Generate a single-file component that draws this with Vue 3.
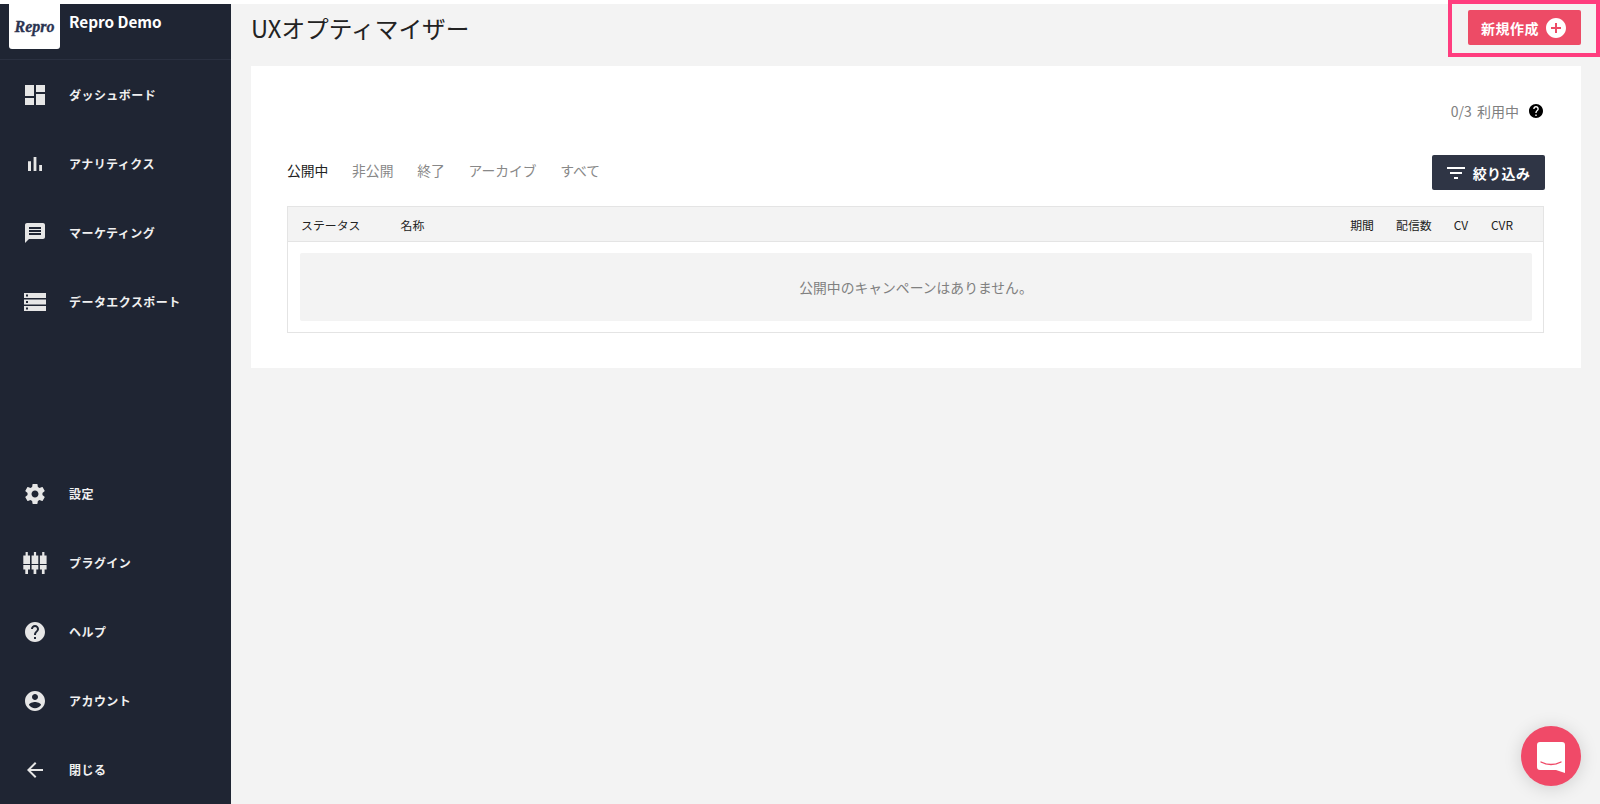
<template>
  <div class="app">
    <aside class="sidebar">
      <div class="brand">
        <div class="logo">Repro</div>
        <span class="brand-name">Repro Demo</span>
      </div>
      <nav class="nav">
        <a v-for="item in topNav" :key="item.label" class="nav-item">
          <svg class="nav-icon" viewBox="0 0 24 24"><path :d="item.icon" /></svg>
          <span>{{ item.label }}</span>
        </a>
      </nav>
      <nav class="nav nav-bottom">
        <a v-for="item in bottomNav" :key="item.label" class="nav-item">
          <svg class="nav-icon" viewBox="0 0 24 24"><path :d="item.icon" /></svg>
          <span>{{ item.label }}</span>
        </a>
      </nav>
    </aside>

    <main class="main">
      <header class="header">
        <h1 class="title">UXオプティマイザー</h1>
        <button class="create-btn">
          新規作成
          <svg class="create-icon" viewBox="2 2 20 20"><path :d="icons.add" /></svg>
        </button>
      </header>

      <section class="card">
        <div class="usage">
          <span>0/3 利用中</span>
          <svg class="usage-icon" viewBox="2 2 20 20"><path :d="icons.help" /></svg>
        </div>

        <div class="toolbar">
          <ul class="tabs">
            <li v-for="(tab, i) in tabs" :key="tab" :class="{ active: i === 0 }">{{ tab }}</li>
          </ul>
          <button class="filter-btn">
            <svg class="filter-icon" viewBox="3 6 18 12"><path :d="icons.filter" /></svg>
            絞り込み
          </button>
        </div>

        <div class="table">
          <div class="table-head">
            <span class="col-status">ステータス</span>
            <span class="col-name">名称</span>
            <span class="col-period">期間</span>
            <span class="col-sent">配信数</span>
            <span class="col-cv">CV</span>
            <span class="col-cvr">CVR</span>
          </div>
          <div class="table-body">
            <div class="empty">公開中のキャンペーンはありません。</div>
          </div>
        </div>
      </section>
    </main>

    <!-- 注釈の枠 -->
    <div class="highlight"></div>

    <button class="chat">
      <svg viewBox="0 0 28 31" width="28" height="31">
        <path d="M3 0h22a3 3 0 0 1 3 3v28l-9-3H3a3 3 0 0 1-3-3V3a3 3 0 0 1 3-3z" fill="#fff" />
        <path d="M4 20c6 3.400 14 3.400 20 0" fill="none" stroke="#f04a68" stroke-width="1.400" stroke-linecap="round" />
      </svg>
    </button>
  </div>
</template>

<script setup>
const icons = {
  add: 'M12 2C6.48 2 2 6.48 2 12s4.48 10 10 10 10-4.48 10-10S17.52 2 12 2zm5 11h-4v4h-2v-4H7v-2h4V7h2v4h4v2z',
  help: 'M12 2C6.48 2 2 6.48 2 12s4.48 10 10 10 10-4.48 10-10S17.52 2 12 2zm1 17h-2v-2h2v2zm2.07-7.75l-.9.92C13.45 12.9 13 13.5 13 15h-2v-.5c0-1.1.45-2.1 1.17-2.83l1.24-1.26c.37-.36.59-.86.59-1.41 0-1.1-.9-2-2-2s-2 .9-2 2H8c0-2.21 1.79-4 4-4s4 1.79 4 4c0 .88-.36 1.68-.93 2.25z',
  filter: 'M10 18h4v-2h-4v2zM3 6v2h18V6H3zm3 7h12v-2H6v2z'
}

// プラグインの縦 3 本
const plug = (x) =>
  `M${x + 2.300} 1h2.200v3.500h2.200V13h-6.700V4.500h2.300zM${x} 14h6.700v4.500h-2v4.500h-2.700v-4.500h-2z`

const topNav = [
  { label: 'ダッシュボード', icon: 'M2 13h9V2H2v11zm0 9h9v-7H2v7zm11 0h9V11h-9v11zm0-20v7h9V2h-9z' },
  { label: 'アナリティクス', icon: 'M5 9.2h3V19H5zM10.6 5h2.8v14h-2.8zm5.6 8H19v6h-2.8z' },
  { label: 'マーケティング', icon: 'M20 2H4c-1.1 0-1.99.9-1.99 2L2 22l4-4h14c1.1 0 2-.9 2-2V4c0-1.1-.9-2-2-2zm-2 12H6v-2h12v2zm0-3H6V9h12v2zm0-3H6V6h12v2z' },
  { label: 'データエクスポート', icon: 'M1 21h22v-5H1v5zm2-3.500h2v2H3v-2zM1 3v5h22V3H1zm4 3.500H3v-2h2v2zM1 14.500h22v-5H1v5zm2-3.500h2v2H3v-2z' }
]

const bottomNav = [
  { label: '設定', icon: 'M19.43 12.98c.04-.32.07-.64.07-.98s-.03-.66-.07-.98l2.11-1.65c.19-.15.24-.42.12-.64l-2-3.46c-.12-.22-.39-.3-.61-.22l-2.49 1c-.52-.4-1.08-.73-1.69-.98l-.38-2.65C14.46 2.18 14.25 2 14 2h-4c-.25 0-.46.18-.49.42l-.38 2.65c-.61.25-1.17.59-1.69.98l-2.49-1c-.23-.09-.49 0-.61.22l-2 3.46c-.13.22-.07.49.12.64l2.11 1.65c-.04.32-.07.65-.07.98s.03.66.07.98l-2.11 1.65c-.19.15-.24.42-.12.64l2 3.46c.12.22.39.3.61.22l2.49-1c.52.4 1.08.73 1.69.98l.38 2.65c.03.24.24.42.49.42h4c.25 0 .46-.18.49-.42l.38-2.65c.61-.25 1.17-.59 1.69-.98l2.49 1c.23.09.49 0 .61-.22l2-3.46c.12-.22.07-.49-.12-.64l-2.11-1.65zM12 15.500c-1.93 0-3.500-1.57-3.500-3.500s1.57-3.500 3.500-3.500 3.500 1.57 3.500 3.500-1.57 3.500-3.500 3.500z' },
  { label: 'プラグイン', icon: plug(0.3) + plug(8.6) + plug(16.9) },
  { label: 'ヘルプ', icon: icons.help },
  { label: 'アカウント', icon: 'M12 2C6.48 2 2 6.48 2 12s4.48 10 10 10 10-4.48 10-10S17.52 2 12 2zm0 3c1.66 0 3 1.34 3 3s-1.34 3-3 3-3-1.34-3-3 1.34-3 3-3zm0 14.200c-2.500 0-4.710-1.28-6-3.220.03-1.990 4-3.080 6-3.080 1.990 0 5.970 1.090 6 3.080-1.290 1.940-3.500 3.220-6 3.220z' },
  { label: '閉じる', icon: 'M20 11H7.830l5.590-5.590L12 4l-8 8 8 8 1.410-1.410L7.830 13H20v-2z' }
]

const tabs = ['公開中', '非公開', '終了', 'アーカイブ', 'すべて']
</script>

<style>
html, body {
  margin: 0;
  background: #fff;
}
</style>

<style scoped>
.app {
  display: flex;
  height: 804px;
  padding-top: 4px;
  box-sizing: border-box;
  overflow: hidden;
  font-family: "Noto Sans CJK JP", "Noto Sans", sans-serif;
  background: #f3f3f3;
  box-shadow: inset 0 4px 0 #fff;
}

.sidebar {
  width: 231px;
  flex-shrink: 0;
  display: flex;
  flex-direction: column;
  background: #1f2533;
  color: #f0f0f0;
}

.brand {
  height: 55px;
  display: flex;
  align-items: flex-start;
  gap: 10px;
  padding-left: 9px;
  border-bottom: 1px solid #2a3040;
}

.logo {
  width: 51px;
  height: 45px;
  background: #fff;
  border-radius: 0 0 3px 3px;
  display: flex;
  align-items: center;
  justify-content: center;
  font-family: "Liberation Serif", serif;
  font-style: italic;
  font-weight: 700;
  font-size: 16px;
  color: #2b3350;
  -webkit-text-stroke: 0.3px #2b3350;
}

.brand-name {
  font-family: "Noto Sans CJK JP", sans-serif;
  font-size: 15.3px;
  font-weight: 700;
  line-height: 20px;
  margin-top: 7px;
  margin-left: -1px;
  color: #fff;
}

.nav {
  display: flex;
  flex-direction: column;
}

.nav-bottom {
  margin-top: auto;
}

.nav-item {
  height: 69px;
  display: flex;
  align-items: center;
  padding-left: 23px;
  gap: 22px;
  font-size: 12px;
  font-weight: 700;
  letter-spacing: 0.45px;
}

.nav-icon {
  width: 24px;
  height: 24px;
  fill: #e6e6e6;
  flex-shrink: 0;
}

.main {
  flex: 1;
  min-width: 0;
  display: flex;
  flex-direction: column;
  padding-left: 20px;
}

.header {
  height: 62px;
  display: flex;
  justify-content: space-between;
  align-items: flex-start;
  padding-right: 19px;
}

.title {
  margin: 6px 0 0;
  font-size: 23.7px;
  font-weight: 400;
  line-height: 36px;
  color: #222;
}

.create-btn {
  width: 113px;
  height: 35px;
  margin-top: 6px;
  display: flex;
  align-items: center;
  justify-content: center;
  gap: 7px;
  border: none;
  border-radius: 2px;
  padding: 0 2px 0 0;
  background: #ed4b66;
  color: #fff;
  font-family: inherit;
  font-size: 14px;
  font-weight: 700;
  letter-spacing: 0.5px;
}

.create-icon {
  width: 20px;
  height: 20px;
  fill: #fff;
}

.highlight {
  position: absolute;
  left: 1448px;
  top: 0;
  width: 152px;
  height: 57px;
  box-sizing: border-box;
  border: 4.5px solid #ff3d7f;
  pointer-events: none;
}

.card {
  width: 1330px;
  height: 302px;
  box-sizing: border-box;
  padding: 0 36px;
  background: #fff;
}

.usage {
  display: flex;
  justify-content: flex-end;
  align-items: center;
  gap: 10px;
  height: 20px;
  margin-top: 35px;
  padding-right: 2px;
  font-size: 14px;
  word-spacing: 2px;
  color: #808080;
}

.usage-icon {
  width: 14px;
  height: 14px;
  fill: #000;
}

.toolbar {
  display: flex;
  justify-content: space-between;
  align-items: center;
  margin-top: 34px;
  height: 35px;
}

.tabs {
  display: flex;
  gap: 23.7px;
  margin: -6px 0 0;
  padding: 0;
  list-style: none;
  font-size: 13.8px;
  color: #888;
}

.tabs .active {
  color: #222;
}

.filter-btn {
  width: 113px;
  height: 35px;
  display: flex;
  align-items: center;
  justify-content: center;
  gap: 8px;
  padding: 0;
  border: none;
  border-radius: 2px;
  background: #2f3545;
  color: #fff;
  font-family: inherit;
  font-size: 14px;
  font-weight: 700;
  letter-spacing: 0.4px;
}

.filter-icon {
  width: 18px;
  height: 12px;
  fill: #fff;
}

.table {
  margin-top: 16px;
  border: 1px solid #e4e4e4;
  height: 127px;
  box-sizing: border-box;
  width: 1257px;
}

.table-head {
  height: 34px;
  display: flex;
  align-items: center;
  padding: 0 30px 0 13px;
  background: #f3f3f3;
  border-bottom: 1px solid #e4e4e4;
  font-size: 11.9px;
  color: #222;
}

.col-status { width: 99.500px; }
.col-name { flex: 1; }
.col-period { margin-right: 22px; }
.col-sent { margin-right: 22px; }
.col-cv { margin-right: 23px; }

.table-body {
  padding: 11px 11px 11px 12px;
}

.empty {
  height: 68px;
  display: flex;
  align-items: center;
  justify-content: center;
  background: #f3f3f3;
  border-radius: 2px;
  font-size: 13.8px;
  padding-bottom: 1px;
  box-sizing: border-box;
  color: #808080;
}

.chat {
  position: absolute;
  left: 1521px;
  top: 726px;
  width: 60px;
  height: 60px;
  display: flex;
  align-items: center;
  justify-content: center;
  padding: 2px 0 0;
  border: none;
  border-radius: 50%;
  background: #f04a68;
  box-shadow: 0 2px 18px rgba(0, 0, 0, 0.15);
}
</style>
